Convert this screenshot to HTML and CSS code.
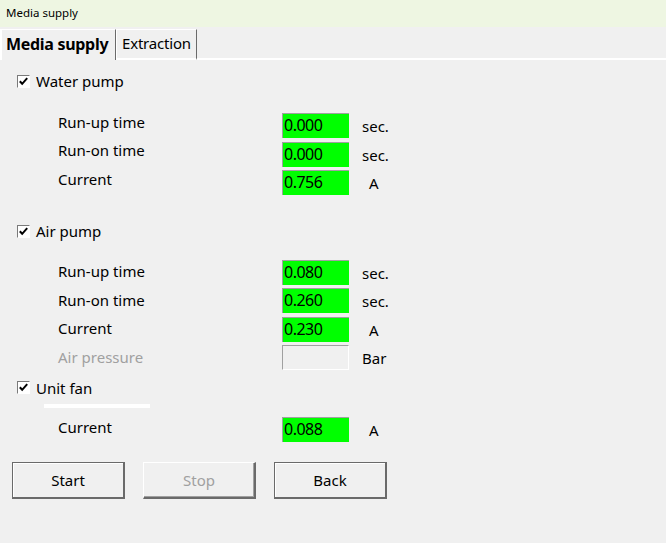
FILE: index.html
```html
<!DOCTYPE html>
<html>
<head>
  <meta charset="UTF-8">
  <title>Media supply</title>
  <link rel="stylesheet" href="styles.css">
</head>
<body>
  <div class="titlebar">Media supply</div>

  <div class="tabs">
    <div class="tab active">Media supply</div>
    <div class="tab">Extraction</div>
    <div class="tab-rest"></div>
  </div>

  <div class="page">
    <!-- Bomba de agua -->
    <div class="group water">
      <div class="check">
        <span class="box"><svg width="11" height="11" viewBox="0 0 11 11"><path d="M1.8 5.2 L4.2 7.8 L9.2 2.2" fill="none" stroke="#000" stroke-width="2"/></svg></span>
        <span>Water pump</span>
      </div>
      <div class="rows">
        <div class="row"><span class="name">Run-up time</span><span class="field">0.000</span><span class="unit">sec.</span></div>
        <div class="row"><span class="name">Run-on time</span><span class="field">0.000</span><span class="unit">sec.</span></div>
        <div class="row"><span class="name">Current</span><span class="field">0.756</span><span class="unit amp">A</span></div>
      </div>
    </div>

    <!-- Bomba de aire -->
    <div class="group air">
      <div class="check">
        <span class="box"><svg width="11" height="11" viewBox="0 0 11 11"><path d="M1.8 5.2 L4.2 7.8 L9.2 2.2" fill="none" stroke="#000" stroke-width="2"/></svg></span>
        <span>Air pump</span>
      </div>
      <div class="rows">
        <div class="row"><span class="name">Run-up time</span><span class="field">0.080</span><span class="unit">sec.</span></div>
        <div class="row"><span class="name">Run-on time</span><span class="field">0.260</span><span class="unit">sec.</span></div>
        <div class="row"><span class="name">Current</span><span class="field">0.230</span><span class="unit amp">A</span></div>
        <div class="row disabled"><span class="name">Air pressure</span><span class="field empty"></span><span class="unit">Bar</span></div>
      </div>
    </div>

    <!-- Ventilador -->
    <div class="group fan">
      <div class="check">
        <span class="box"><svg width="11" height="11" viewBox="0 0 11 11"><path d="M1.8 5.2 L4.2 7.8 L9.2 2.2" fill="none" stroke="#000" stroke-width="2"/></svg></span>
        <span>Unit fan</span>
      </div>
      <div class="bar"></div>
      <div class="rows">
        <div class="row"><span class="name">Current</span><span class="field">0.088</span><span class="unit amp">A</span></div>
      </div>
    </div>

    <div class="buttons">
      <button class="btn">Start</button>
      <button class="btn" disabled>Stop</button>
      <button class="btn">Back</button>
    </div>
  </div>
</body>
</html>
```

FILE: styles.css
```css
/* Ventana de suministro */
body {
  margin: 0;
  background-color: #f0f0f0;
  font-family: "Noto Sans", "Open Sans", sans-serif;
  font-size: 15px;
  color: #000;
}

.titlebar {
  height: 27px;
  line-height: 25px;
  padding-left: 6px;
  font-size: 11.5px;
  background-color: #eef6e2;
}

/* Pestañas */
.tabs {
  display: flex;
  align-items: flex-end;
  height: 33px;
}

.tab {
  box-sizing: border-box;
  width: 81px;
  height: 31px;
  line-height: 27px;
  padding-left: 5px;
  border-top: 1px solid #fff;
  border-left: 1px solid #fff;
  border-right: 1px solid #6a6a6a;
  border-bottom: 2px solid #fff;
  font-size: 15px;
  letter-spacing: -0.2px;
}

.tab.active {
  width: 116px;
  height: 31px;
  border-left-width: 2px;
  border-bottom: none;
  padding-left: 4px;
  line-height: 29px;
  font-weight: bold;
  font-size: 16px;
  letter-spacing: -0.3px;
}

.tab-rest {
  flex: 1;
  border-bottom: 2px solid #fff;
}

/* Grupos */
.page {
  padding-left: 17px;
}

.check {
  display: flex;
  align-items: center;
  height: 22px;
}

.box {
  width: 11px;
  height: 11px;
  border: 1px solid #fff;
  border-top-color: #7a7a7a;
  border-left-color: #7a7a7a;
  background-color: #fff;
  margin-right: 6px;
  display: flex;
}

.water .check { margin-top: 10px; }
.water .rows { margin-top: 21px; }
.air .check { margin-top: 25px; }
.air .rows { margin-top: 17.5px; }
.fan .check { margin-top: 6.5px; }
.fan .rows { margin-top: 9px; }

.bar {
  width: 106px;
  height: 4px;
  margin: 5px 0 0 27px;
  background-color: #fff;
}

.rows {
  display: flex;
  flex-direction: column;
  gap: 3.5px;
}

.row {
  display: grid;
  grid-template-columns: 224px 67px 1fr;
  margin-left: 41px;
  height: 25px;
}

.name {
  line-height: 20px;
  margin-top: -1.5px;
}

.air .name { margin-top: 1.5px; }
.fan .name { margin-top: 0.5px; }

.field {
  height: 24px;
  line-height: 23px;
  padding-left: 1px;
  font-size: 16px;
  letter-spacing: -0.5px;
  background-color: #00ff00;
  border-top: 1px solid #a0a0a0;
  border-left: 1px solid #a0a0a0;
}

.field.empty {
  height: 23px;
  background-color: #f0f0f0;
  border-right: 1px solid #fff;
  border-bottom: 1px solid #fff;
}

.unit {
  line-height: 26px;
  padding-left: 13px;
}

.unit.amp {
  padding-left: 20px;
}

.disabled .name {
  color: #a0a0a0;
}

/* Botones */
.buttons {
  display: flex;
  gap: 18px;
  margin: 20px 0 0 -5px;
}

.btn {
  width: 113px;
  height: 37px;
  font-family: inherit;
  font-size: 15px;
  color: #000;
  background-color: #f0f0f0;
  border: 1px solid #6a6a6a;
  border-right-width: 2px;
  border-bottom-width: 2px;
  box-shadow: inset 1px 1px #fff;
  padding: 0;
}

.btn:disabled {
  color: #a0a0a0;
  border-color: #fff #6a6a6a #6a6a6a #fff;
  box-shadow: inset -1px -1px #a0a0a0;
}
```
